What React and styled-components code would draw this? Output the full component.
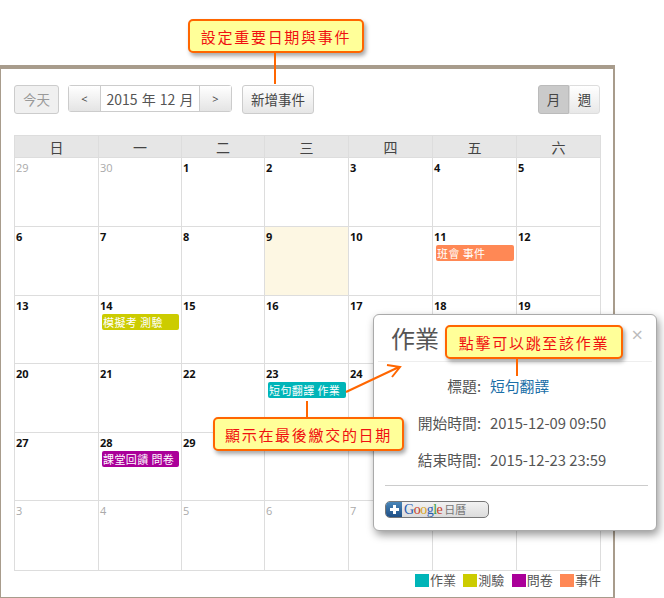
import React from 'react';
import styled, { createGlobalStyle } from 'styled-components';

const CJK = '"Noto Sans CJK TC", "Open Sans", sans-serif';

const weeks = [
	[[29, 1], [30, 1], [1], [2], [3], [4], [5]],
	[[6], [7], [8], [9], [10], [11], [12]],
	[[13], [14], [15], [16], [17], [18], [19]],
	[[20], [21], [22], [23], [24], [25], [26]],
	[[27], [28], [29], [30], [31], [1, 1], [2, 1]],
	[[3, 1], [4, 1], [5, 1], [6, 1], [7, 1], [8, 1], [9, 1]],
];

const events = {
	11: { title: '班會 事件', color: '#ff8855' },
	14: { title: '模擬考 測驗', color: '#cccc00' },
	23: { title: '短句翻譯 作業', color: '#00b5b8' },
	28: { title: '課堂回饋 問卷', color: '#aa0099' },
};

const dayNames = ['日', '一', '二', '三', '四', '五', '六'];
const legend = [
	{ name: '作業', color: '#00b5b8' },
	{ name: '測驗', color: '#cccc00' },
	{ name: '問卷', color: '#aa0099' },
	{ name: '事件', color: '#ff8855' },
];

function App() {
	return (
		<Page>
			<GlobalStyle />
			<Frame>
				<Toolbar>
					<ToolButton disabled>今天</ToolButton>
					<NavGroup>
						<NavButton>&lt;</NavButton>
						<NavLabel>2015 年 12 月</NavLabel>
						<NavButton>&gt;</NavButton>
					</NavGroup>
					<ToolButton>新增事件</ToolButton>
					<ViewGroup>
						<ViewButton $active>月</ViewButton>
						<ViewButton>週</ViewButton>
					</ViewGroup>
				</Toolbar>
				<Calendar>
					{dayNames.map((d) => (
						<DayName key={d}>{d}</DayName>
					))}
					{weeks.map((week, w) =>
						week.map(([n, other]) => {
							const ev = !other && events[n];
							return (
								<Cell key={`${w}-${n}`} $today={!other && n === 9}>
									<DateNum $other={other}>{n}</DateNum>
									{ev && <EventBar $color={ev.color}>{ev.title}</EventBar>}
								</Cell>
							);
						})
					)}
				</Calendar>
				<Legend>
					{legend.map((l) => (
						<LegendItem key={l.name}>
							<Swatch $color={l.color} />
							{l.name}
						</LegendItem>
					))}
				</Legend>
			</Frame>

			<Popover>
				<PopTitle>作業</PopTitle>
				<Close>×</Close>
				<PopBody>
					<InfoRow>
						<InfoLabel>標題:</InfoLabel>
						<InfoLink>短句翻譯</InfoLink>
					</InfoRow>
					<InfoRow>
						<InfoLabel>開始時間:</InfoLabel>
						<span>2015-12-09 09:50</span>
					</InfoRow>
					<InfoRow>
						<InfoLabel>結束時間:</InfoLabel>
						<span>2015-12-23 23:59</span>
					</InfoRow>
				</PopBody>
				<PopFooter>
					<GoogleButton>
						<PlusBox>
							<svg width="11" height="11" viewBox="0 0 11 11">
								<path d="M4 1h3v3h3v3H7v3H4V7H1V4h3z" fill="#fff" />
							</svg>
						</PlusBox>
						<GoogleWord>
							<i style={{ color: '#2a5db0' }}>G</i>
							<i style={{ color: '#c8402a' }}>o</i>
							<i style={{ color: '#d9a520' }}>o</i>
							<i style={{ color: '#2a5db0' }}>g</i>
							<i style={{ color: '#3a9a3a' }}>l</i>
							<i style={{ color: '#c8402a' }}>e</i>
						</GoogleWord>
						<GoogleCal>日曆</GoogleCal>
					</GoogleButton>
				</PopFooter>
			</Popover>

			<Callout $left={188} $top={19} $width={176}>設定重要日期與事件</Callout>
			<Stem $left={274} $top={53} $height={31} />
			<Callout $left={445} $top={325} $width={178}>點擊可以跳至該作業</Callout>
			<Stem $left={516} $top={359} $height={17} />
			<Callout $left={213} $top={417} $width={191}>顯示在最後繳交的日期</Callout>
			<Stem $left={306} $top={401} $height={16} />

			<ArrowSvg width="60" height="32" viewBox="0 0 60 32">
				<path d="M1 30 L54 5 M42 3 L55 5 L47 15" fill="none" stroke="#ff6600" strokeWidth="2" />
			</ArrowSvg>
		</Page>
	);
}

const GlobalStyle = createGlobalStyle`
	body {
		margin: 0;
		background: #fff;
		font-family: ${CJK};
		color: #444;
	}
`;

const Page = styled.div`
	position: relative;
	width: 664px;
	height: 598px;
	padding-top: 65px;
	box-sizing: border-box;
	overflow: hidden;
`;

const Frame = styled.div`
	width: 615px;
	height: 533px;
	box-sizing: border-box;
	border: 2px solid #a89c8c;
	border-top-width: 4px;
	border-bottom-width: 1px;
	border-left-width: 1px;
	padding: 16px 13px 0 13px;
`;

const Toolbar = styled.div`
	display: flex;
	align-items: flex-start;
	height: 50px;
`;

const ToolButton = styled.button`
	height: 29px;
	padding: 0 8px;
	margin-right: 9px;
	box-sizing: border-box;
	border: 1px solid #ccc;
	border-radius: 3px;
	background: ${(p) => (p.disabled ? '#f0f0f0' : 'linear-gradient(#fff, #e6e6e6)')};
	color: ${(p) => (p.disabled ? '#999' : '#444')};
	font: 13.5px/1 ${CJK};
`;

const NavGroup = styled.div`
	display: flex;
	height: 27px;
	margin-right: 10px;
	box-sizing: border-box;
	border: 1px solid #ccc;
	border-radius: 3px;
`;

const NavButton = styled.div`
	width: 31px;
	display: flex;
	align-items: center;
	justify-content: center;
	background: linear-gradient(#fff, #e4e4e4);
	font: 11px 'Open Sans', sans-serif;
	color: #444;
`;

const NavLabel = styled.div`
	width: 100px;
	box-sizing: border-box;
	display: flex;
	align-items: center;
	justify-content: center;
	word-spacing: 1px;
	border-left: 1px solid #ccc;
	border-right: 1px solid #ccc;
	font: 14px/1 ${CJK};
	color: #555;
`;

const ViewGroup = styled.div`
	display: flex;
	margin-left: auto;
	height: 29px;
`;

const ViewButton = styled.div`
	width: 31px;
	display: flex;
	align-items: center;
	justify-content: center;
	box-sizing: border-box;
	border: 1px solid ${(p) => (p.$active ? '#bbb' : '#ddd')};
	border-radius: ${(p) => (p.$active ? '3px 0 0 3px' : '0 3px 3px 0')};
	background: ${(p) => (p.$active ? '#cacaca' : 'linear-gradient(#fff, #e8e8e8)')};
	font: 13.5px/1 ${CJK};
	color: #444;
`;

const Calendar = styled.div`
	display: grid;
	grid-template-columns: 84px 83px 83px 84px 84px 84px 84px;
	grid-template-rows: 22px 69px 69px 68px 69px 68px 70px;
	width: 587px;
	box-sizing: border-box;
	border-left: 1px solid #ddd;
	border-top: 1px solid #ddd;
`;

const DayName = styled.div`
	display: flex;
	align-items: center;
	justify-content: center;
	background: #e6e6e6;
	border-right: 1px solid #ddd;
	border-bottom: 1px solid #ddd;
	font-size: 14px;
	line-height: 1;
	color: #444;
`;

const Cell = styled.div`
	box-sizing: border-box;
	padding: 3px 2px 0 1px;
	border-right: 1px solid #ddd;
	border-bottom: 1px solid #ddd;
	background: ${(p) => (p.$today ? '#fdf7e3' : 'transparent')};
`;

const DateNum = styled.div`
	font: ${(p) => (p.$other ? 'normal' : 'bold')} 11px/13px 'Open Sans', sans-serif;
	color: ${(p) => (p.$other ? '#aaa' : '#111')};
`;

const EventBar = styled.div`
	height: 16px;
	margin: 2px 0 0 2px;
	padding-left: 1px;
	border-radius: 2px;
	background: ${(p) => p.$color};
	color: #fff;
	font-size: 11px;
	line-height: 16px;
	letter-spacing: 0.4px;
	white-space: nowrap;
`;

const Legend = styled.div`
	display: flex;
	justify-content: flex-end;
	gap: 7.3px;
	width: 587px;
	margin-top: 2px;
`;

const LegendItem = styled.div`
	display: flex;
	align-items: center;
	gap: 1px;
	font-size: 13px;
	line-height: 14px;
	color: #555;
`;

const Swatch = styled.span`
	width: 14px;
	height: 13px;
	background: ${(p) => p.$color};
`;

const Popover = styled.div`
	position: absolute;
	left: 373px;
	top: 314px;
	width: 284px;
	height: 217px;
	box-sizing: border-box;
	background: #fff;
	border: 1px solid #aaa;
	border-radius: 6px;
	box-shadow: 2px 4px 8px rgba(0, 0, 0, 0.4);
`;

const PopTitle = styled.div`
	margin: 0 4px;
	height: 47px;
	padding: 6px 0 0 13px;
	box-sizing: border-box;
	border-bottom: 1px solid #eee;
	font-size: 24px;
	line-height: 34px;
	color: #555;
`;

const Close = styled.span`
	position: absolute;
	right: 13px;
	top: 10px;
	font: 20px/20px 'Open Sans', sans-serif;
	color: #bbb;
`;

const PopBody = styled.div`
	display: flex;
	flex-direction: column;
	gap: 17px;
	padding: 14px 0 0 0;
	font-size: 14.8px;
	line-height: 20px;
	color: #555;
`;

const InfoRow = styled.div`
	display: flex;
	gap: 9px;
`;

const InfoLabel = styled.span`
	width: 107px;
	text-align: right;
`;

const InfoLink = styled.a`
	color: #1b6fa8;
`;

const PopFooter = styled.div`
	margin: 15px 8px 0 11px;
	padding-top: 15px;
	border-top: 1px solid #ccc;
`;

const GoogleButton = styled.div`
	display: flex;
	align-items: center;
	width: 104px;
	height: 17px;
	box-sizing: border-box;
	border: 1px solid #777;
	border-radius: 5px;
	overflow: hidden;
	background: linear-gradient(#f2f2f2, #dcdcdc);
`;

const PlusBox = styled.span`
	width: 16px;
	height: 15px;
	display: flex;
	align-items: center;
	justify-content: center;
	background: linear-gradient(#4a86b8, #1f4f86);
`;

const GoogleWord = styled.span`
	margin-left: 2px;
	font: 14px/15px 'Liberation Serif', serif;
	letter-spacing: -0.5px;
	i {
		font-style: normal;
	}
`;

const GoogleCal = styled.span`
	margin-left: 2px;
	font-size: 11px;
	line-height: 15px;
	color: #777;
`;

const Callout = styled.div`
	position: absolute;
	left: ${(p) => p.$left}px;
	top: ${(p) => p.$top}px;
	width: ${(p) => p.$width}px;
	height: 34px;
	box-sizing: border-box;
	display: flex;
	align-items: center;
	justify-content: center;
	background: #ffff99;
	border: 2px solid #ff6600;
	border-radius: 5px;
	box-shadow: 2px 3px 4px rgba(0, 0, 0, 0.35);
	color: #f01010;
	font-size: 15px;
	letter-spacing: 1.7px;
	white-space: nowrap;
`;

const Stem = styled.div`
	position: absolute;
	left: ${(p) => p.$left}px;
	top: ${(p) => p.$top}px;
	width: 2px;
	height: ${(p) => p.$height}px;
	background: #ff6600;
`;

const ArrowSvg = styled.svg`
	position: absolute;
	left: 345px;
	top: 362px;
`;

export default App;
